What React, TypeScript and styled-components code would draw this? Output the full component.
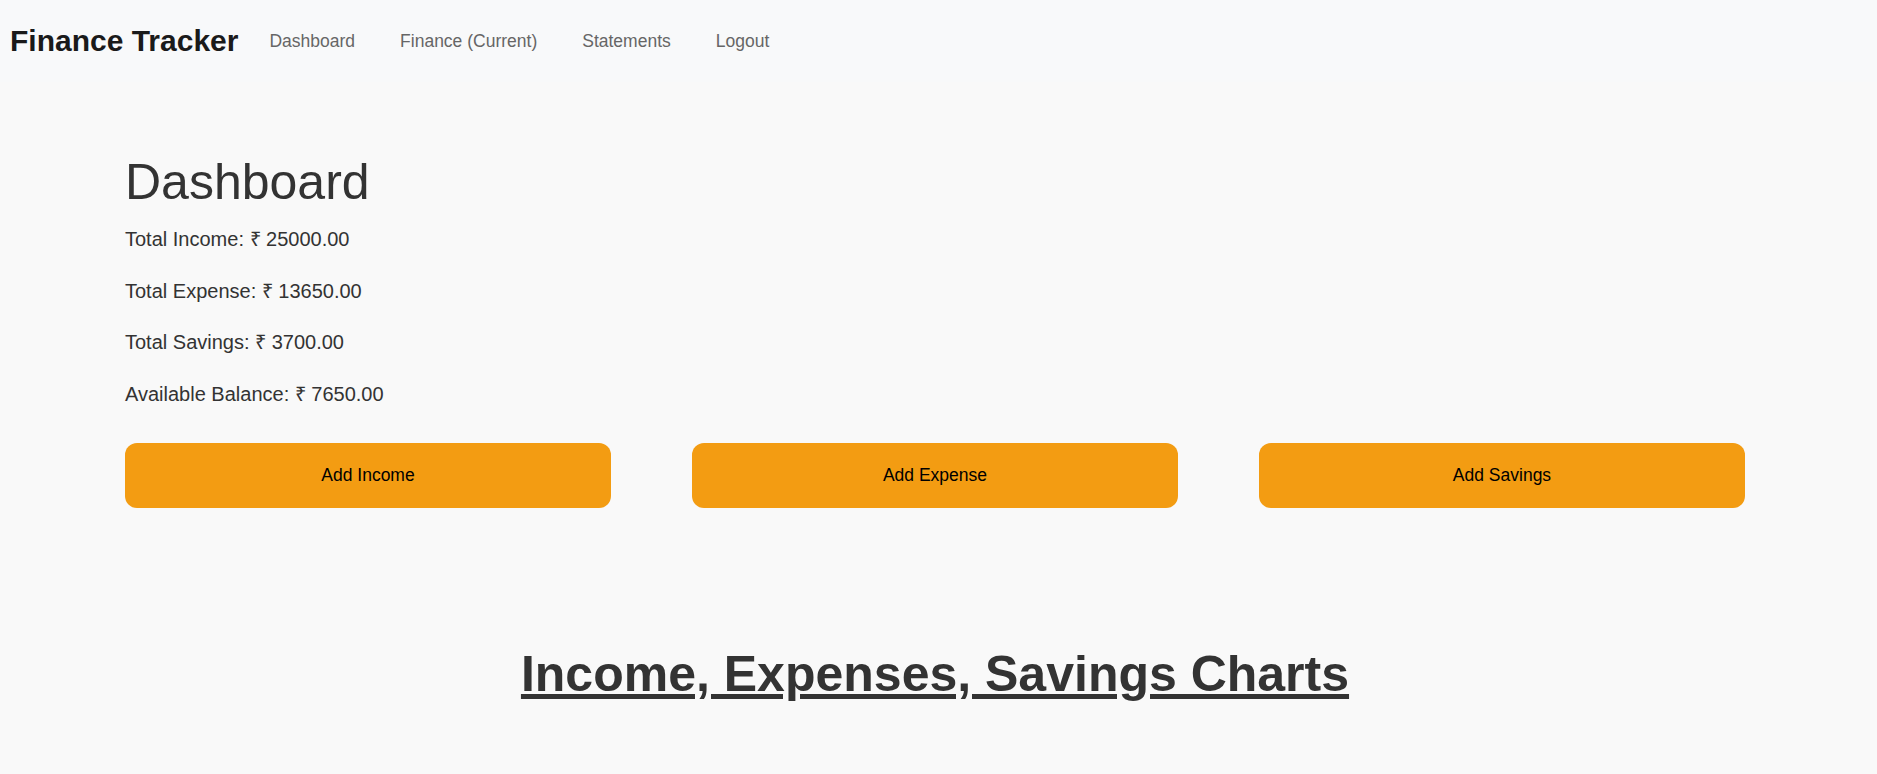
import styled, { createGlobalStyle } from 'styled-components';

const GlobalStyle = createGlobalStyle`
  html, body {
    margin: 0;
    padding: 0;
    background-color: #f9f9f9;
    font-family: "Liberation Sans", Arial, sans-serif;
    color: #333;
  }
`;

const Navbar = styled.nav`
  height: 82px;
  padding: 0 10px;
  display: flex;
  align-items: center;
  background-color: #f8f9fa;
`;

const Brand = styled.a`
  font-size: 30px;
  font-weight: 700;
  color: #1a1a1a;
  text-decoration: none;
  margin-right: 31px;
`;

const NavList = styled.ul`
  list-style: none;
  margin: 0;
  padding: 0;
  display: flex;
  gap: 45px;
`;

const NavLink = styled.a`
  font-size: 17.5px;
  color: #666;
  text-decoration: none;
  cursor: pointer;
`;

const Main = styled.main`
  padding: 72px 132px 40px 125px;
`;

const Title = styled.h1`
  margin: 0 0 13px;
  font-size: 50px;
  line-height: 56px;
  font-weight: 400;
  color: #333;
`;

const Stat = styled.p`
  margin: 0 0 19.5px;
  font-size: 20px;
  line-height: 32px;
`;

const ButtonRow = styled.div`
  margin-top: 33px;
  display: grid;
  grid-template-columns: repeat(3, 1fr);
  gap: 81px;
`;

const ActionButton = styled.button`
  height: 65px;
  border: 0;
  border-radius: 12px;
  background-color: #f39c12;
  color: #000;
  font-family: "Liberation Sans", Arial, sans-serif;
  font-size: 17.5px;
  cursor: pointer;
  &:hover {
    background-color: #e68a00;
  }
`;

const ChartsTitle = styled.h2`
  margin: 137px 0 0;
  text-align: center;
  font-size: 50px;
  font-weight: 700;
  text-decoration: underline;
  color: #333;
`;

const stats = [
  ['Total Income', '25000.00'],
  ['Total Expense', '13650.00'],
  ['Total Savings', '3700.00'],
  ['Available Balance', '7650.00'],
];

export default function App() {
  return (
    <>
      <GlobalStyle />
      <Navbar>
        <Brand>Finance Tracker</Brand>
        <NavList>
          <li><NavLink>Dashboard</NavLink></li>
          <li><NavLink>Finance (Current)</NavLink></li>
          <li><NavLink>Statements</NavLink></li>
          <li><NavLink>Logout</NavLink></li>
        </NavList>
      </Navbar>
      <Main>
        <Title>Dashboard</Title>
        {stats.map(([label, value]) => (
          <Stat key={label}>
            {label}: ₹ {value}
          </Stat>
        ))}
        <ButtonRow>
          <ActionButton>Add Income</ActionButton>
          <ActionButton>Add Expense</ActionButton>
          <ActionButton>Add Savings</ActionButton>
        </ButtonRow>
        <ChartsTitle>Income, Expenses, Savings Charts</ChartsTitle>
      </Main>
    </>
  );
}
